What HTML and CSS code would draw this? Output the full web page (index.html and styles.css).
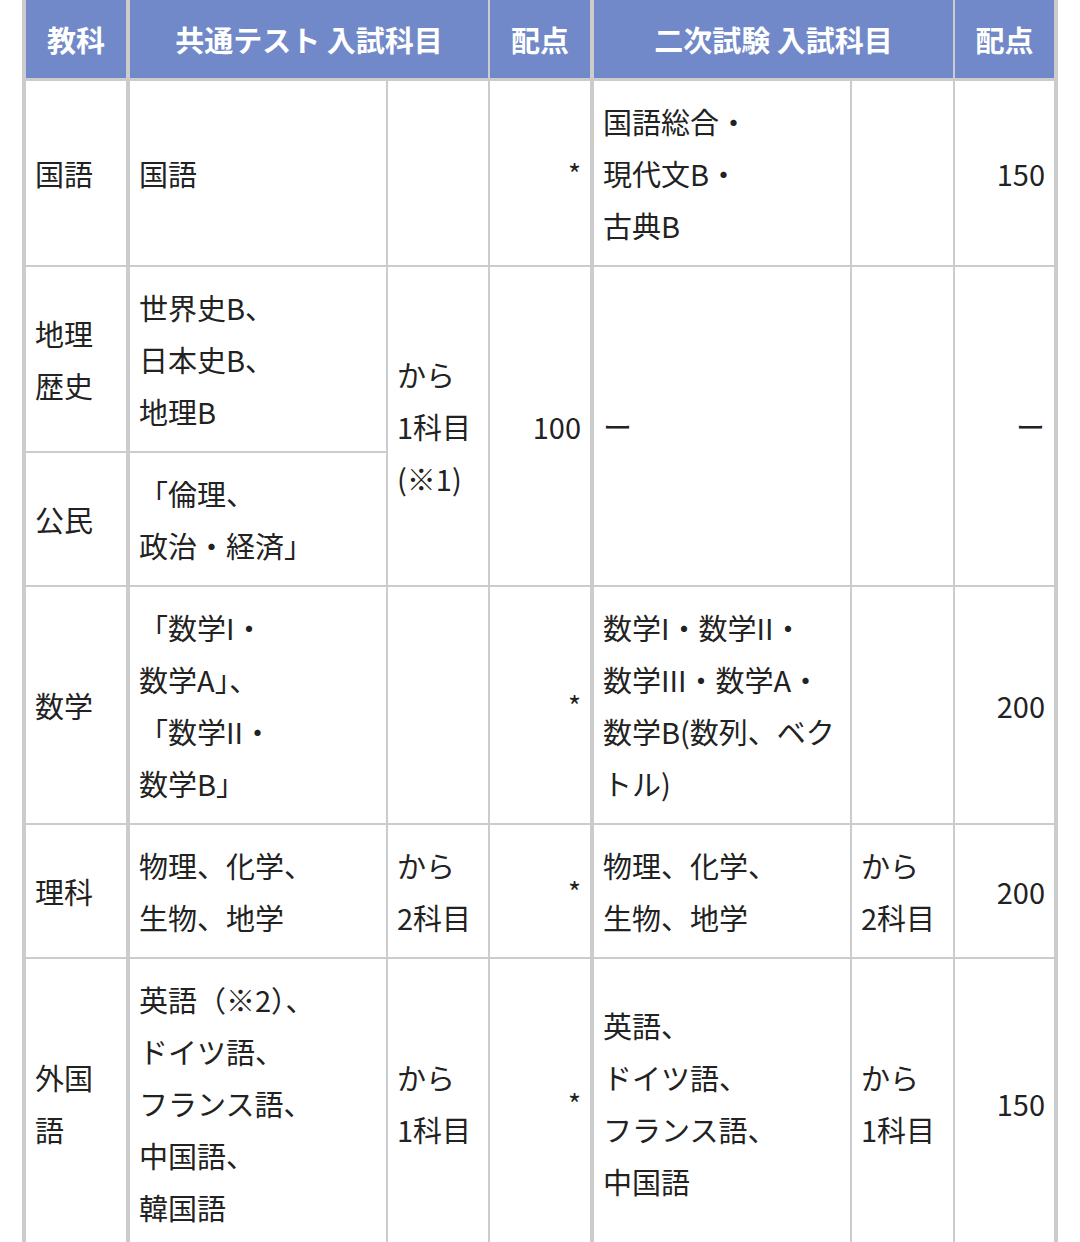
FILE: index.html
```html
<!DOCTYPE html>
<html lang="ja">
<head>
<meta charset="utf-8">
<title>入試科目</title>
<link rel="stylesheet" href="styles.css">
</head>
<body>
<div class="tbl">
  <div class="c th thick">教科</div>
  <div class="c th span2 center">共通テスト 入試科目</div>
  <div class="c th thick">配点</div>
  <div class="c th span2 center">二次試験 入試科目</div>
  <div class="c th thick">配点</div>

  <div class="c thick">国語</div>
  <div class="c">国語</div>
  <div class="c"></div>
  <div class="c thick right"><span class="ast">*</span></div>
  <div class="c">国語総合・<br>現代文B・<br>古典B</div>
  <div class="c"></div>
  <div class="c thick right">150</div>

  <div class="c thick">地理歴史</div>
  <div class="c">世界史B、<br>日本史B、<br>地理B</div>
  <div class="c rspan2">から<br>1科目<br>(※1)</div>
  <div class="c thick right rspan2">100</div>
  <div class="c rspan2">ー</div>
  <div class="c rspan2"></div>
  <div class="c thick right rspan2">ー</div>

  <div class="c thick">公民</div>
  <div class="c">「倫理、<br>政治・経済」</div>

  <div class="c thick">数学</div>
  <div class="c">「数学I・<br>数学A」、<br>「数学II・<br>数学B」</div>
  <div class="c"></div>
  <div class="c thick right"><span class="ast">*</span></div>
  <div class="c">数学I・数学II・<br>数学III・数学A・<br>数学B(数列、ベクトル)</div>
  <div class="c"></div>
  <div class="c thick right">200</div>

  <div class="c thick">理科</div>
  <div class="c">物理、化学、<br>生物、地学</div>
  <div class="c">から<br>2科目</div>
  <div class="c thick right"><span class="ast">*</span></div>
  <div class="c">物理、化学、<br>生物、地学</div>
  <div class="c">から<br>2科目</div>
  <div class="c thick right">200</div>

  <div class="c thick">外国語</div>
  <div class="c">英語（※2）、<br>ドイツ語、<br>フランス語、<br>中国語、<br>韓国語</div>
  <div class="c">から<br>1科目</div>
  <div class="c thick right"><span class="ast">*</span></div>
  <div class="c">英語、<br>ドイツ語、<br>フランス語、<br>中国語</div>
  <div class="c">から<br>1科目</div>
  <div class="c thick right">150</div>
</div>
</body>
</html>
```

FILE: styles.css
```css
html, body {
  margin: 0;
  padding: 0;
  background: #ffffff;
}

body {
  font-family: "Noto Sans CJK JP", "Noto Sans", sans-serif;
  color: #222222;
}

.tbl {
  display: grid;
  grid-template-columns: 104px 258px 102px 104px 258px 103px 103px;
  width: fit-content;
  margin-left: 22px;
  border-left: 4px solid #cccccc;
}

.c {
  box-sizing: border-box;
  display: flex;
  align-items: center;
  padding: 14px 10px 14px 9px;
  font-size: 29px;
  line-height: 52px;
  border-right: 2px solid #cccccc;
  border-bottom: 2px solid #cccccc;
  background: #ffffff;
}

.c.thick {
  border-right-width: 4px;
}

.c.th {
  background: #7189c9;
  color: #ffffff;
  font-weight: 700;
  justify-content: center;
  padding: 13px 4px;
  border-bottom-width: 3px;
  white-space: nowrap;
}

.span2 {
  grid-column: span 2;
}

.rspan2 {
  grid-row: span 2;
}

.c.right {
  justify-content: flex-end;
  text-align: right;
  padding-right: 9px;
}

.ast {
  font-size: 28px;
}
```
